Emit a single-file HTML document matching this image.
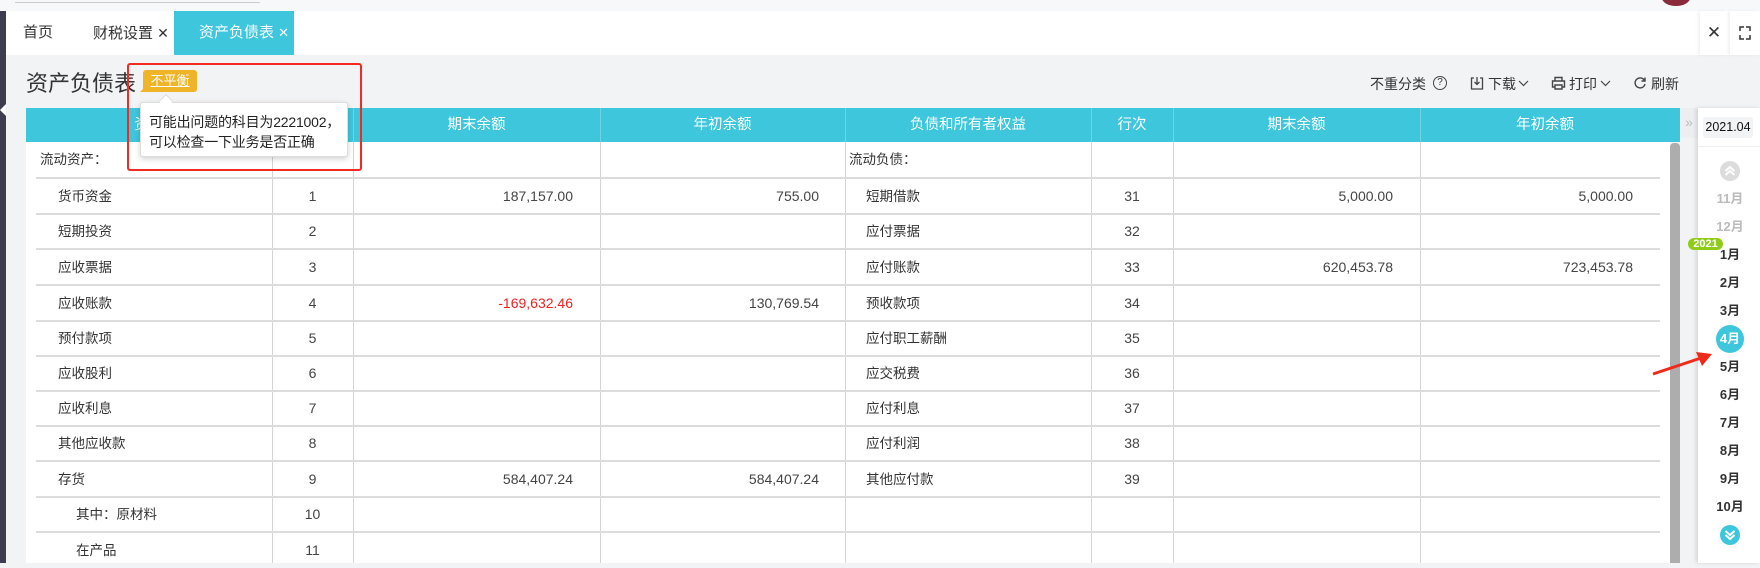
<!DOCTYPE html>
<html><head><meta charset="utf-8"><style>
*{margin:0;padding:0;box-sizing:border-box}
body{width:1760px;height:563px;overflow:hidden;background:#f2f3f5;font-family:"Liberation Sans","Noto Sans CJK SC",sans-serif;color:#333;position:relative}
.a{position:absolute;white-space:nowrap}
.top{left:0;top:0;width:1760px;height:11px;background:#f7f8fa}
.tabs{left:0;top:11px;width:1760px;height:44px;background:#fff}
.tab{top:11px;height:44px;line-height:44px;font-size:15px;color:#333}
.hd{top:108px;height:34px;background:#3ec6dc;left:26px;width:1654px}
.hc{top:108px;height:34px;line-height:34px;color:#fff;font-size:14.5px;text-align:center}
.vl{width:1px;background:#d4d4d4}
.hl{height:2px;background:#dcdcdc;left:36px;width:1624px}
.t{font-size:13.5px;color:#333;line-height:35px;height:35px}
.n{font-size:14px;color:#444;text-align:right;line-height:35px;height:35px}
.c1{left:272px;width:81px;text-align:center}
.c2{left:1091px;width:82px;text-align:center}
.m{font-size:13px;font-weight:bold;color:#333;width:60px;text-align:center;left:1700px;line-height:16px}
</style></head><body>
<div class="a top"></div>
<div class="a" style="left:15px;top:2px;width:245px;height:1px;background:#ccc"></div>
<div class="a" style="left:1662px;top:-10px;width:28px;height:16px;border-radius:50%;background:#8a2a3a"></div>
<div class="a tabs"></div>
<div class="a" style="left:0;top:11px;width:6px;height:552px;background:#3d3d4f"></div>
<div class="a" style="left:0;top:104px;width:0;height:0;border-top:6px solid transparent;border-bottom:6px solid transparent;border-right:6px solid #fff"></div>
<div class="a tab" style="left:23px">首页</div>
<div class="a tab" style="left:93px">财税设置 <span style="font-size:14px">✕</span></div>
<div class="a tab" style="left:174px;width:120px;background:#3ec6dc;color:#fff;padding-left:25px">资产负债表 <span style="font-size:13px">✕</span></div>
<div class="a" style="left:1700px;top:11px;width:28px;height:44px;background:#fff;box-shadow:-2px 0 3px rgba(0,0,0,.06);text-align:center;line-height:44px;font-size:17px;color:#333">✕</div>
<div class="a" style="left:1730px;top:11px;width:30px;height:44px;background:#fff;box-shadow:-2px 0 3px rgba(0,0,0,.06)">
<svg width="30" height="44"><path d="M10 20v-4h4M16 16h4v4M20 24v4h-4M14 28h-4v-4" fill="none" stroke="#333" stroke-width="1.5"/></svg></div>

<div class="a" style="left:26px;top:68px;font-size:22px;color:#333;line-height:32px">资产负债表</div>
<div class="a" style="left:143px;top:70px;width:54px;height:22px;background:#f0b429;border-radius:3px;color:#fff;font-size:13px;text-align:center;line-height:22px"><span style="text-decoration:underline">不平衡</span></div>
<div class="a" style="left:140px;top:86px;width:0;height:0;border-left:6px solid transparent;border-bottom:6px solid #f0b429"></div>

<div class="a" style="left:1370px;top:74px;font-size:14px;line-height:20px">不重分类</div>
<div class="a" style="left:1433px;top:76px;width:14px;height:14px;border:1px solid #444;border-radius:50%;font-size:10px;text-align:center;line-height:12px">?</div>
<svg class="a" style="left:1470px;top:76px" width="14" height="14"><path d="M4 2H1.5v11h11V2H10M7 1v7M4.5 6 7 8.5 9.5 6" fill="none" stroke="#444" stroke-width="1.3"/></svg>
<div class="a" style="left:1488px;top:74px;font-size:14px;line-height:20px">下载</div>
<svg class="a" style="left:1518px;top:80px" width="11" height="8"><path d="M1 1l4.5 4.5L10 1" fill="none" stroke="#444" stroke-width="1.2"/></svg>
<svg class="a" style="left:1551px;top:76px" width="15" height="14"><path d="M4 5V1.5h7V5M3.5 11H1.5V5h12v6h-2M4 9h7v4H4z" fill="none" stroke="#444" stroke-width="1.4"/></svg>
<div class="a" style="left:1569px;top:74px;font-size:14px;line-height:20px">打印</div>
<svg class="a" style="left:1600px;top:80px" width="11" height="8"><path d="M1 1l4.5 4.5L10 1" fill="none" stroke="#444" stroke-width="1.2"/></svg>
<svg class="a" style="left:1633px;top:76px" width="14" height="14"><path d="M11.5 4.5A5 5 0 1 0 12 8M12 1.5v3.5H8.5" fill="none" stroke="#444" stroke-width="1.4"/></svg>
<div class="a" style="left:1651px;top:74px;font-size:14px;line-height:20px">刷新</div>

<div class="a" style="left:26px;top:142px;width:1644px;height:421px;background:#fff"></div>
<div class="a hd"></div>
<div class="a hc" style="left:26px;width:246px">资产</div>
<div class="a hc" style="left:272px;width:81px">行次</div>
<div class="a hc" style="left:353px;width:247px">期末余额</div>
<div class="a hc" style="left:600px;width:245px">年初余额</div>
<div class="a hc" style="left:845px;width:246px">负债和所有者权益</div>
<div class="a hc" style="left:1091px;width:82px">行次</div>
<div class="a hc" style="left:1173px;width:247px">期末余额</div>
<div class="a hc" style="left:1420px;width:250px">年初余额</div>
<div class="a vl" style="left:272px;top:108px;height:455px"></div>
<div class="a vl" style="left:353px;top:108px;height:455px"></div>
<div class="a vl" style="left:600px;top:108px;height:455px"></div>
<div class="a vl" style="left:845px;top:108px;height:455px"></div>
<div class="a vl" style="left:1091px;top:108px;height:455px"></div>
<div class="a vl" style="left:1173px;top:108px;height:455px"></div>
<div class="a vl" style="left:1420px;top:108px;height:455px"></div>
<div class="a" style="left:272px;top:108px;width:1px;height:34px;background:#6fd3e3"></div>
<div class="a" style="left:353px;top:108px;width:1px;height:34px;background:#6fd3e3"></div>
<div class="a" style="left:600px;top:108px;width:1px;height:34px;background:#6fd3e3"></div>
<div class="a" style="left:845px;top:108px;width:1px;height:34px;background:#6fd3e3"></div>
<div class="a" style="left:1091px;top:108px;width:1px;height:34px;background:#6fd3e3"></div>
<div class="a" style="left:1173px;top:108px;width:1px;height:34px;background:#6fd3e3"></div>
<div class="a" style="left:1420px;top:108px;width:1px;height:34px;background:#6fd3e3"></div>

<div class="a hl" style="top:177px"></div>
<div class="a hl" style="top:213px"></div>
<div class="a hl" style="top:248px"></div>
<div class="a hl" style="top:284px"></div>
<div class="a hl" style="top:320px"></div>
<div class="a hl" style="top:355px"></div>
<div class="a hl" style="top:390px"></div>
<div class="a hl" style="top:425px"></div>
<div class="a hl" style="top:460px"></div>
<div class="a hl" style="top:496px"></div>
<div class="a hl" style="top:531px"></div>

<div class="a t" style="left:40px;top:142px">流动资产：</div>
<div class="a t" style="left:849px;top:142px">流动负债：</div>

<div class="a t" style="left:58px;top:179px">货币资金</div>
<div class="a t" style="left:58px;top:214px">短期投资</div>
<div class="a t" style="left:58px;top:250px">应收票据</div>
<div class="a t" style="left:58px;top:286px">应收账款</div>
<div class="a t" style="left:58px;top:321px">预付款项</div>
<div class="a t" style="left:58px;top:356px">应收股利</div>
<div class="a t" style="left:58px;top:391px">应收利息</div>
<div class="a t" style="left:58px;top:426px">其他应收款</div>
<div class="a t" style="left:58px;top:462px">存货</div>
<div class="a t" style="left:76px;top:497px">其中：原材料</div>
<div class="a t" style="left:76px;top:533px">在产品</div>

<div class="a n c1" style="top:179px">1</div>
<div class="a n c1" style="top:214px">2</div>
<div class="a n c1" style="top:250px">3</div>
<div class="a n c1" style="top:286px">4</div>
<div class="a n c1" style="top:321px">5</div>
<div class="a n c1" style="top:356px">6</div>
<div class="a n c1" style="top:391px">7</div>
<div class="a n c1" style="top:426px">8</div>
<div class="a n c1" style="top:462px">9</div>
<div class="a n c1" style="top:497px">10</div>
<div class="a n c1" style="top:533px">11</div>

<div class="a n" style="right:1187px;top:179px">187,157.00</div>
<div class="a n" style="right:941px;top:179px">755.00</div>
<div class="a n" style="right:1187px;top:286px;color:#f02020">-169,632.46</div>
<div class="a n" style="right:941px;top:286px">130,769.54</div>
<div class="a n" style="right:1187px;top:462px">584,407.24</div>
<div class="a n" style="right:941px;top:462px">584,407.24</div>

<div class="a t" style="left:866px;top:179px">短期借款</div>
<div class="a t" style="left:866px;top:214px">应付票据</div>
<div class="a t" style="left:866px;top:250px">应付账款</div>
<div class="a t" style="left:866px;top:286px">预收款项</div>
<div class="a t" style="left:866px;top:321px">应付职工薪酬</div>
<div class="a t" style="left:866px;top:356px">应交税费</div>
<div class="a t" style="left:866px;top:391px">应付利息</div>
<div class="a t" style="left:866px;top:426px">应付利润</div>
<div class="a t" style="left:866px;top:462px">其他应付款</div>
<div class="a n c2" style="top:179px">31</div>
<div class="a n c2" style="top:214px">32</div>
<div class="a n c2" style="top:250px">33</div>
<div class="a n c2" style="top:286px">34</div>
<div class="a n c2" style="top:321px">35</div>
<div class="a n c2" style="top:356px">36</div>
<div class="a n c2" style="top:391px">37</div>
<div class="a n c2" style="top:426px">38</div>
<div class="a n c2" style="top:462px">39</div>
<div class="a n" style="right:367px;top:179px">5,000.00</div>
<div class="a n" style="right:127px;top:179px">5,000.00</div>
<div class="a n" style="right:367px;top:250px">620,453.78</div>
<div class="a n" style="right:127px;top:250px">723,453.78</div>

<div class="a" style="left:1670px;top:143px;width:10px;height:420px;background:#adadad;border-radius:4px 4px 0 0"></div>
<div class="a" style="left:1680px;top:108px;width:18px;height:30px;background:#eceef1;color:#bbb;font-size:14px;text-align:center;line-height:28px">»</div>

<div class="a" style="left:1698px;top:108px;width:62px;height:455px;background:#fff;box-shadow:-2px 0 4px rgba(0,0,0,.12)"></div>
<div class="a" style="left:1698px;top:146px;width:62px;height:1px;background:#eee"></div>
<div class="a" style="left:1703px;top:117px;width:50px;height:21px;background:#f2f3f5;border-radius:3px;font-size:12.5px;text-align:center;line-height:21px;color:#111">2021.04</div>
<div class="a" style="left:1720px;top:161px;width:20px;height:20px;border-radius:50%;background:#dcdcdc"><svg width="20" height="20"><path d="M5.5 10l4.5-4 4.5 4M5.5 14l4.5-4 4.5 4" fill="none" stroke="#fff" stroke-width="2"/></svg></div>
<div class="a m" style="top:191px;color:#bbb">11月</div>
<div class="a m" style="top:219px;color:#bbb">12月</div>
<div class="a" style="left:1688px;top:238px;width:35px;height:12px;background:#8fcc1a;border-radius:6px;color:#fff;font-size:11px;font-weight:bold;text-align:center;line-height:12px">2021</div>
<div class="a m" style="top:247px">1月</div>
<div class="a m" style="top:275px">2月</div>
<div class="a m" style="top:303px">3月</div>
<div class="a" style="left:1716px;top:325px;width:28px;height:28px;border-radius:50%;background:#3ec6dc;color:#fff;font-size:13px;font-weight:bold;text-align:center;line-height:28px">4月</div>
<div class="a m" style="top:359px">5月</div>
<div class="a m" style="top:387px">6月</div>
<div class="a m" style="top:415px">7月</div>
<div class="a m" style="top:443px">8月</div>
<div class="a m" style="top:471px">9月</div>
<div class="a m" style="top:499px">10月</div>
<div class="a" style="left:1720px;top:525px;width:20px;height:20px;border-radius:50%;background:#3ec6dc"><svg width="20" height="20"><path d="M5.5 6l4.5 4 4.5-4M5.5 10l4.5 4 4.5-4" fill="none" stroke="#fff" stroke-width="2"/></svg></div>

<svg class="a" style="left:1640px;top:340px" width="80" height="45"><path d="M13 34L67 16" stroke="#f02a1a" stroke-width="3"/><path d="M72 14L56 12 62 26z" fill="#f02a1a"/></svg>

<div class="a" style="left:140px;top:102px;width:208px;height:55px;background:#fff;border:1px solid #ddd;border-radius:3px;box-shadow:0 2px 6px rgba(0,0,0,.18);font-size:14px;color:#222;padding:9px 0 0 8px;line-height:20px;white-space:normal;letter-spacing:-0.2px">可能出问题的科目为2221002，<br>可以检查一下业务是否正确</div>
<div class="a" style="left:161px;top:96px;width:10px;height:10px;background:#fff;border-left:1px solid #ddd;border-top:1px solid #ddd;transform:rotate(45deg)"></div>
<div class="a" style="left:127px;top:63px;width:235px;height:108px;border:2px solid #f32a20;border-radius:3px"></div>
</body></html>
